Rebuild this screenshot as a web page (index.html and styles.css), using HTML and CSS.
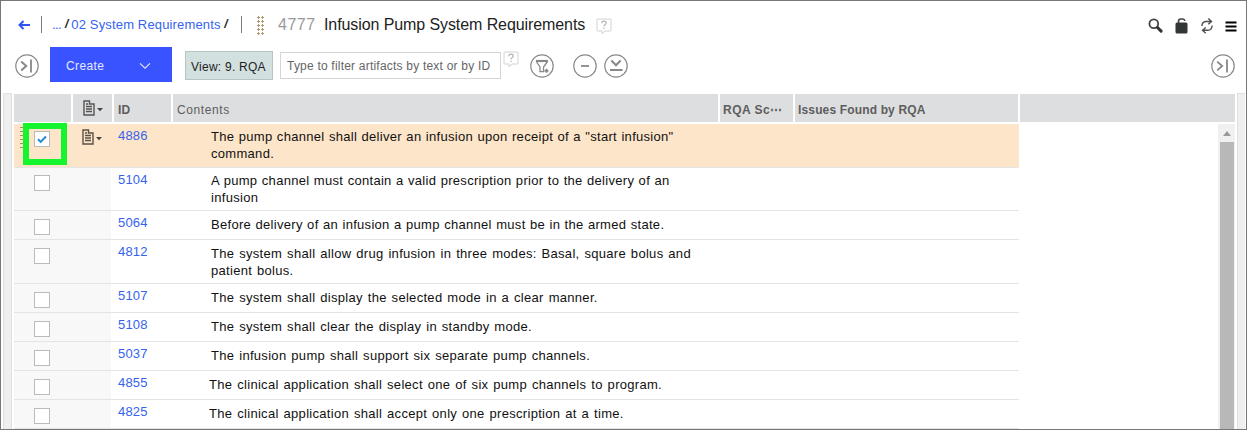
FILE: index.html
```html
<!DOCTYPE html>
<html lang="en">
<head>
<meta charset="utf-8">
<title>Infusion Pump System Requirements</title>
<link rel="stylesheet" href="styles.css">
</head>
<body>
<div class="window">
  <header class="titlebar">
    <svg class="back" width="14" height="12" viewBox="0 0 14 12"><path d="M13 6H2.500M6.500 2 2.500 6l4 4" fill="none" stroke="#2f55f5" stroke-width="2"/></svg>
    <i class="divider"></i>
    <nav class="crumbs"><a>...</a><b>/</b><a class="crumb-name">02 System Requirements</a><b>/</b></nav>
    <i class="divider second"></i>
    <i class="grip"></i>
    <span class="doc-id">4777</span>
    <h1>Infusion Pump System Requirements</h1>
    <svg class="help" width="16" height="17" viewBox="0 0 16 17"><path d="M2 1h12q1 0 1 1v10q0 1-1 1H9l-3 3v-3H2q-1 0-1-1V2q0-1 1-1z" fill="#fff" stroke="#d2d2d2"/><path d="M5.800 5.200q0-2 2.200-2t2.200 1.800q0 1-1.200 1.700-1 .6-1 1.800M8 9.800v1.300" fill="none" stroke="#b4b4b4" stroke-width="1.200"/></svg>
    <div class="actions">
      <svg width="15" height="16" viewBox="0 0 15 16"><circle cx="5.800" cy="5.800" r="4.400" fill="none" stroke="#444" stroke-width="1.800"/><path d="m9.500 9.500 3.600 3.600" stroke="#333" stroke-width="3" stroke-linecap="round"/></svg>
      <svg width="13" height="16" viewBox="0 0 13 16"><rect x=".5" y="4.500" width="12" height="11" rx="1.500" fill="#333637"/><path d="M3.500 5V3.400Q3.500 1 6 1h1.500q2 0 2.300 2" fill="none" stroke="#444" stroke-width="1.600"/></svg>
      <svg width="12" height="16" viewBox="0 0 12 16"><path d="M.9 8V7.500Q1.500 3.500 5 3.500h5M7.300.5l3.200 3-3.200 2.800M11.100 7.500V8q-.6 4.300-4.100 4.300H2M4.700 9.500l-3.200 2.800 3.200 3" fill="none" stroke="#505050" stroke-width="1.400"/></svg>
      <svg width="12" height="16" viewBox="0 0 12 16"><path d="M.5 4h11M.5 8h11M.5 12h11" transform="translate(0 .5)" stroke="#000" stroke-width="2"/></svg>
    </div>
  </header>
  <div class="toolbar">
    <svg class="round" width="24" height="24" viewBox="0 0 24 24"><circle cx="12" cy="12" r="11.200"/><path d="m6.200 7.600 5 4.400-5 4.400" stroke-width="2"/><path d="M16 5.500v13" stroke-width="1.800"/></svg>
    <button class="create"><span>Create</span><svg width="12" height="8" viewBox="0 0 12 8"><path d="m1 1.400 5 4.800 5-4.800" fill="none" stroke="#dfe4ff" stroke-width="1.200"/></svg></button>
    <button class="view"><span>View: 9. RQA</span></button>
    <div class="filter"><span>Type to filter artifacts by text or by ID</span></div>
    <svg class="help small" width="16" height="17" viewBox="0 0 16 17"><path d="M2 1h12q1 0 1 1v10q0 1-1 1H9l-3 3v-3H2q-1 0-1-1V2q0-1 1-1z" fill="#fff" stroke="#d2d2d2"/><path d="M5.800 5.200q0-2 2.200-2t2.200 1.800q0 1-1.200 1.700-1 .6-1 1.800M8 9.800v1.300" fill="none" stroke="#b4b4b4" stroke-width="1.200"/></svg>
    <svg class="round funnel" width="24" height="24" viewBox="0 0 24 24"><circle cx="12" cy="12" r="11.200"/><path d="M6 7h12" stroke-width="2.200"/><path d="M6.200 7.500 10 13v4.600h3.500V13l4-5.500" stroke-width="1.300"/><path d="M16.500 14.800v4M14.500 16.800h4" stroke-width="1.800"/></svg>
    <svg class="round minus" width="24" height="24" viewBox="0 0 24 24"><circle cx="12" cy="12" r="11.200"/><path d="M8 12h8" stroke-width="1.800"/></svg>
    <svg class="round down" width="24" height="24" viewBox="0 0 24 24"><circle cx="12" cy="12" r="11.200"/><path d="m7.400 6.500 4.600 4.800 4.600-4.800M6 16h12.500" stroke-width="2"/></svg>
    <svg class="round right" width="24" height="24" viewBox="0 0 24 24"><circle cx="12" cy="12" r="11.200"/><path d="m6.200 7.600 5 4.400-5 4.400" stroke-width="1.800"/><path d="M16 5.500v13" stroke-width="1.800"/></svg>
  </div>
  <main class="main">
    <aside class="edge left"></aside>
    <section class="grid">
      <div class="head">
        <div></div>
        <div class="head-type"><svg width="20" height="16" viewBox="0 0 20 16"><path d="M1 1h5.500v3H11v11H1zM3 4h2M3 6.500h6M3 9h6M3 11.500h6" fill="none" stroke="#555" stroke-width="1.400"/><path d="M14 8h6l-3 3.200z" fill="#444"/></svg></div>
        <div class="head-id"><span>ID</span></div>
        <div class="head-contents"><span>Contents</span></div>
        <div class="head-score"><span>RQA Sc⋯</span></div>
        <div class="head-issues"><span>Issues Found by RQA</span></div>
        <div></div>
      </div>
      <div class="body">
        <div class="rows">
          <div class="row tall selected"><div class="select"><i class="row-grip"></i><i class="box"><svg width="10" height="9" viewBox="0 0 10 9"><path d="m1 4.200 2.700 2.700L9 1.500" fill="none" stroke="#2389c9" stroke-width="2"/></svg></i><i class="focus"></i></div><div class="type"><svg width="20" height="16" viewBox="0 0 20 16"><path d="M1 1h5.500v3H11v11H1zM3 4h2M3 6.500h6M3 9h6M3 11.500h6" fill="none" stroke="#5a5046" stroke-width="1.400"/><path d="M14 8h6l-3 3.200z" fill="#444"/></svg></div><a>4886</a><p><span>The pump channel shall deliver an infusion upon receipt of a "start infusion"</span><br><span>command.</span></p></div>
          <div class="row two"><div class="select"><i class="box"></i></div><div class="type"></div><a>5104</a><p><span>A pump channel must contain a valid prescription prior to the delivery of an</span><br><span>infusion</span></p></div>
          <div class="row low"><div class="select"><i class="box"></i></div><div class="type"></div><a>5064</a><p><span>Before delivery of an infusion a pump channel must be in the armed state.</span></p></div>
          <div class="row low tall loose"><div class="select"><i class="box"></i></div><div class="type"></div><a>4812</a><p><span>The system shall allow drug infusion in three modes: Basal, square bolus and</span><br><span>patient bolus.</span></p></div>
          <div class="row low loose"><div class="select"><i class="box"></i></div><div class="type"></div><a>5107</a><p><span>The system shall display the selected mode in a clear manner.</span></p></div>
          <div class="row low loose"><div class="select"><i class="box"></i></div><div class="type"></div><a>5108</a><p><span>The system shall clear the display in standby mode.</span></p></div>
          <div class="row low loose"><div class="select"><i class="box"></i></div><div class="type"></div><a>5037</a><p><span>The infusion pump shall support six separate pump channels.</span></p></div>
          <div class="row low loose outdent"><div class="select"><i class="box"></i></div><div class="type"></div><a>4855</a><p><span>The clinical application shall select one of six pump channels to program.</span></p></div>
          <div class="row low loose outdent"><div class="select"><i class="box"></i></div><div class="type"></div><a>4825</a><p><span>The clinical application shall accept only one prescription at a time.</span></p></div>
        </div>
        <div class="scroll"><i class="arrow"></i><i class="thumb"></i></div>
      </div>
    </section>
    <aside class="edge right-edge"></aside>
  </main>
</div>
</body>
</html>
```
FILE: styles.css
```css
* { box-sizing: border-box; }
body { margin: 0; font-family: "Liberation Sans", Arial, sans-serif; font-size: 12px; background: #fff; color: #222; overflow: hidden; }
i { font-style: normal; display: block; }
svg { display: block; flex: none; }
span, a, b, h1 { white-space: nowrap; }
button { font: inherit; margin: 0; }
.window { width: 1247px; height: 430px; border: 1px solid #777; display: flex; flex-direction: column; overflow: hidden; }

.titlebar { height: 46px; flex: none; display: flex; align-items: center; padding: 2px 9px 0 16px; }
.back { margin-right: 10px; }
.divider { width: 1px; height: 17px; background: #748080; margin-top: -2px; }
.crumbs { display: flex; width: 191px; padding-left: 10px; font-size: 13px; margin-top: -1px; }
.crumbs a { color: #3563ee; }
.crumbs a:first-child { width: 10px; letter-spacing: -.6px; }
.crumbs b { color: #222; margin: 0 3px; font-style: italic; font-size: 12px; line-height: 15px; }
.crumb-name { width: 150px; letter-spacing: .15px; }
.second { margin-left: 8px; }
.grip { width: 8px; height: 20px; margin: 2px 0 0 15px; background: radial-gradient(circle at 1.5px 1.5px, #b39a70 1.1px, transparent 1.4px) 0 0 / 4px 4px; }
.doc-id { margin-left: 13px; width: 46px; font-size: 16px; color: #999; letter-spacing: .5px; }
h1 { margin: 0; font-size: 16px; font-weight: 400; width: 272px; letter-spacing: -.09px; }
.help { margin-top: 3px; }
.actions { margin-left: auto; display: flex; gap: 12.5px; margin-top: 1px; }

.toolbar { height: 46px; flex: none; display: flex; align-items: flex-start; padding: 0 11px 0 14px; }
.round { margin-top: 7px; fill: none; stroke: #888; stroke-width: 1.2; }
.create { margin-left: 11px; width: 122px; height: 35px; background: #3853ff; border: 0; color: #e5e9ff; display: flex; justify-content: space-between; align-items: center; padding: 2px 21px 0 16px; letter-spacing: .4px; }
.view { margin: 4px 0 0 13px; width: 88px; height: 29px; background: #d2e0df; border: 1px solid #b4c5c3; color: #222; padding: 2px 0 0 5px; text-align: left; letter-spacing: .25px; }
.filter { margin: 5px 0 0 7px; width: 221px; height: 27px; border: 1px solid #d5d5d5; color: #666; display: flex; align-items: center; padding-left: 6px; letter-spacing: .21px; }
.small { margin: 4px 0 0 2px; }
.funnel { margin-left: 11px; }
.minus { margin-left: 19px; }
.down { margin-left: 7px; }
.right { margin-left: auto; }

.main { flex: 1; display: flex; min-height: 0; }
.edge { background: #efefef; border: 1px solid #e0e0e0; border-bottom: 0; }
.left { width: 9px; margin-left: 2px; margin-right: 2px; }
.right-edge { width: 8px; margin-left: 2px; border-right: 0; }
.grid { width: 1221px; display: flex; flex-direction: column; padding-top: 1px; }
.head { height: 28px; flex: none; display: grid; grid-template-columns: 57px 39px 57px 545px 73px 223px 1fr; gap: 2px; color: #5d5d5d; }
.head > div { background: #dddee0; display: flex; align-items: center; padding-top: 3px; }
.head .head-type { padding: 0 0 0 10px; }
.head .head-id, .head .head-score, .head .head-issues { font-weight: 700; padding-left: 4px; letter-spacing: .15px; }
.head .head-score, .head .head-issues { padding-left: 3px; }
.head .head-score { letter-spacing: .5px; }
.head .head-contents { padding-left: 4px; letter-spacing: .6px; }
.body { flex: 1; display: flex; justify-content: space-between; padding-top: 2px; }
.rows { width: 1005px; }
.row { height: 29px; border-bottom: 1px solid #e4e4e4; display: grid; grid-template-columns: 59px 38px 100px 1fr; }
.two { height: 43px; }
.tall { height: 44px; }
.select, .type { background: #f8f8f8; }
.select { position: relative; padding: 7px 0 0 20px; }
.low .select { padding-top: 8px; }
.box { width: 16px; height: 16px; border: 1px solid #bbb; background: #fff; padding: 3px 2px; }
.row a { color: #3563ee; font-size: 13px; padding-left: 7px; line-height: 16px; padding-top: 4px; letter-spacing: .15px; }
.row p { margin: 0; color: #111; font-size: 13px; line-height: 17px; padding-top: 4px; letter-spacing: .3px; word-spacing: .5px; }
.low p { padding-top: 5px; }
.loose p { word-spacing: 1px; }
.outdent p { margin-left: -2px; }
.selected, .selected .select, .selected .type { background: #fde5c9; }
.type { padding: 5px 0 0 9px; }
.row-grip { position: absolute; left: 6px; top: 3px; width: 3px; height: 24px; background: repeating-linear-gradient(#a58d6b 0 1px, transparent 1px 4px); }
.focus { position: absolute; left: 9px; top: -1px; width: 44px; height: 42px; border: 6px solid #15f52d; }
.scroll { width: 17px; background: #f0f0f0; display: flex; flex-direction: column; align-items: center; }
.arrow { border: 4px solid transparent; border-top-width: 0; border-bottom: 5px solid #999; margin: 7px 0 6px; }
.thumb { width: 14px; flex: 1; background: #b8b8b8; }
```
